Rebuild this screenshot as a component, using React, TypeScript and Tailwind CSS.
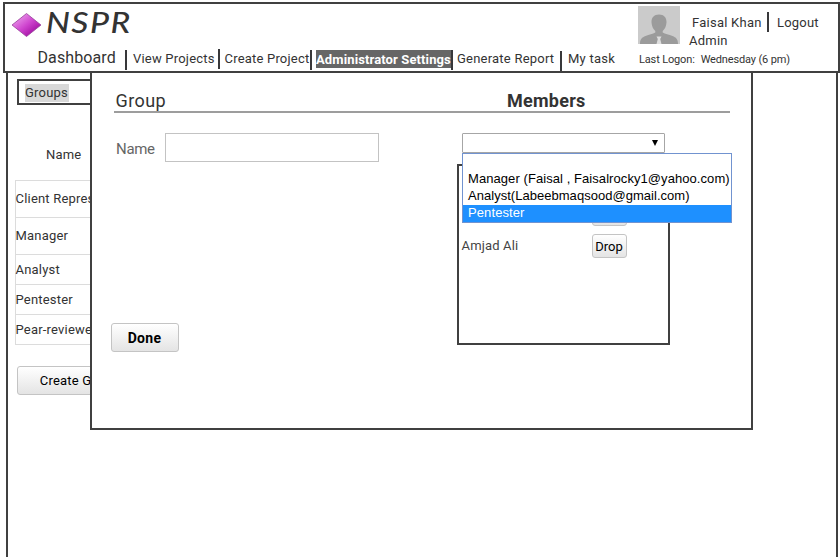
import React from "react";

const groups = [
  { name: "Client Representative", height: "h-[37px]" },
  { name: "Manager", height: "h-[37px]" },
  { name: "Analyst", height: "h-[30px]" },
  { name: "Pentester", height: "h-[30px]" },
  { name: "Pear-reviewer", height: "h-[30px]" },
];

const button =
  "rounded-[3px] border border-[#c4c4c4] bg-linear-to-b from-white to-[#e4e4e4] text-black whitespace-nowrap";

function Separator({ className = "" }: { className?: string }) {
  return <span className={`h-5 w-[2px] shrink-0 bg-[#38383a] ${className}`} />;
}

function Logo() {
  return (
    <div className="flex h-[45px] items-start pl-[6px]">
      <svg className="mt-2 h-[26px] w-[31px]" viewBox="0 0 30 26" preserveAspectRatio="none">
        <defs>
          <linearGradient id="gem" x1="0" y1="0" x2="1" y2="1">
            <stop offset="0.2" stopColor="#e58be5" />
            <stop offset="0.5" stopColor="#cf45cf" />
            <stop offset="0.8" stopColor="#a512a5" />
          </linearGradient>
        </defs>
        <path d="M15 1.500 29 13 15 24.500 1 13Z" fill="url(#gem)" stroke="#96409a" strokeWidth="0.8" />
      </svg>
      <span className="ml-[4px] origin-left scale-x-[1.2] font-['Segoe_Print','Bradley_Hand','Lato',sans-serif] text-[28px] leading-9 font-medium tracking-[1.2px] text-[#333] italic">
        NSPR
      </span>
    </div>
  );
}

function Nav() {
  return (
    <nav className="flex h-[22px] items-start text-[13px] leading-[18px] whitespace-nowrap">
      <a className="ml-8 w-[88px] pl-[0.5px] text-[16px] tracking-[0.1px]">Dashboard</a>
      <Separator className="mt-[1px]" />
      <a className="ml-[6px] w-[85px] pt-[1px] tracking-[0.2px]">View Projects</a>
      <Separator />
      <a className="ml-[4px] w-[86px] pt-[1px] pl-[0.5px] tracking-[0.2px]">Create Project</a>
      <Separator className="mt-[1px]" />
      <a className="mt-[1px] ml-[4px] w-[135px] bg-[#666] pt-[1px] leading-[17px] font-bold tracking-[0.12px] text-white">
        Administrator Settings
      </a>
      <Separator className="mt-[1px]" />
      <a className="ml-[4px] w-[103px] pt-[1px] tracking-[0.22px]">Generate Report</a>
      <Separator className="mt-[2px]" />
      <a className="ml-[6px] pt-[1px] tracking-[0.25px]">My task</a>
    </nav>
  );
}

function UserPanel() {
  return (
    <div className="w-[200px] shrink-0 pt-[2px] whitespace-nowrap">
      <div className="flex h-[45px] items-start">
        <svg className="h-[38px] w-[42px] shrink-0" viewBox="0 0 42 38">
          <rect width="42" height="38" fill="#cbcbcb" />
          <path
            d="M21 8.500c5 0 7.700 3 7.500 8-.2 4-2 7-3.800 8.500v1.500c2.500 1.500 6 2 9.800 3.500C38 31.500 40 33 40 38H2c0-5 2-6.500 5.500-8 3.800-1.500 7.300-2 9.800-3.500V25c-1.800-1.500-3.600-4.500-3.800-8.500-.2-5 2.500-8 7.500-8Z"
            fill="#9b9b9b"
          />
          <path d="M18.500 30.500h5l-1.300 2.500 1.300 5h-5l1.300-5Z" fill="#dedede" />
        </svg>
        <div className="ml-[9px] w-[78px] text-[13px] leading-[18px] tracking-[0.25px]">
          <div className="pt-[8px] pl-[3px]">Faisal Khan</div>
          <div>Admin</div>
        </div>
        <Separator className="mt-[6px]" />
        <a className="ml-[8px] pt-[8px] text-[13px] leading-[18px] tracking-[0.2px]">Logout</a>
      </div>
      <div className="pl-[1px] text-[11px] leading-[17px] tracking-[-0.15px]">
        Last Logon:<span className="ml-[6px]">Wednesday (6 pm)</span>
      </div>
    </div>
  );
}

function GroupsPage() {
  return (
    <section className="flex h-full w-[832px] flex-col items-start border-x-2 border-[#404040] text-[13px] tracking-[0.2px]">
      <div className="mt-[6px] ml-[9px] h-[26px] w-[300px] border-2 border-[#404040] pt-[2px] pl-[6px]">
        <span className="inline-block h-[18px] w-[44px] bg-[#d8d8d8] leading-[18px]">Groups</span>
      </div>
      <div className="mt-[41px] ml-[38px] leading-[18px]">Name</div>
      <div className="mt-[16px] ml-[7px] w-[400px] border-x border-t border-[#dcdcdc]">
        {groups.map((g) => (
          <div key={g.name} className={`flex items-center border-b border-[#dcdcdc] ${g.height}`}>
            <span className="-ml-[0.5px]">{g.name}</span>
          </div>
        ))}
      </div>
      <button className={`mt-[21px] ml-[9px] h-[29px] w-[124px] ${button}`}>Create Group</button>
    </section>
  );
}

function MemberOptions() {
  return (
    <ul className="absolute top-[20px] left-0 h-[70px] w-[270px] border border-[#7193d0] bg-white font-['Liberation_Sans',Arial,sans-serif] text-[13px] leading-[15px] whitespace-nowrap text-black">
      <li className="h-[17px]" />
      <li className="h-[17px] pl-[5px] tracking-[0.07px]">Manager (Faisal , Faisalrocky1@yahoo.com)</li>
      <li className="h-[17px] pl-[5px] tracking-[0.03px]">Analyst(Labeebmaqsood@gmail.com)</li>
      <li className="h-[17px] bg-[#1e90ff] pl-[5px] tracking-[0.1px] text-white">Pentester</li>
    </ul>
  );
}

function GroupDialog() {
  return (
    <div className="absolute top-[71px] left-[90px] h-[359px] w-[663px] border-2 border-[#404040] bg-white pt-[17px]">
      <div className="ml-[22px] flex h-[23px] w-[616px] border-b-2 border-[#9d9d9d] text-[18px] leading-[21px]">
        <h2 className="w-[393px] pl-[1.5px] tracking-[0.4px]">Group</h2>
        <h2 className="font-bold tracking-[0.25px]">Members</h2>
      </div>
      <div className="mt-[20px] flex">
        <div className="w-[365px]">
          <label className="ml-[24px] flex items-center text-[15px] text-[#666]">
            <span className="w-[49px] pt-[3px] tracking-[-0.3px]">Name</span>
            <input className="h-[29px] w-[214px] border border-[#c3c3c3]" />
          </label>
          <button
            className={`mt-[161px] ml-[19px] block h-[29px] w-[68px] pt-px pr-px text-[14px] font-bold tracking-[0.3px] ${button}`}
          >
            Done
          </button>
        </div>
        <div>
          <div className="relative ml-[5px] h-[20px] w-[203px] rounded-[1px] border border-[#a6a6a6]">
            <svg className="mt-[6px] ml-[189px] h-[6px] w-[6px]" viewBox="0 0 6 6">
              <path d="M0 0H6L3 6Z" fill="#000" />
            </svg>
            <div className="absolute -top-px -left-px">
              <MemberOptions />
            </div>
          </div>
          <div className="mt-[11px] flex h-[181px] w-[213px] flex-col border-2 border-[#404040] pt-[36px] pl-[3px] text-[13px]">
            <div className="flex h-[32px] items-start">
              <span className="w-[130px]" />
              <button className={`h-[24px] w-[35px] ${button}`}>Drop</button>
            </div>
            <div className="flex items-center">
              <span className="w-[130px] -ml-[0.5px] mr-[0.5px] tracking-[0.15px] text-[#444]">Amjad Ali</span>
              <button className={`h-[24px] w-[35px] pt-px pr-px ${button}`}>Drop</button>
            </div>
          </div>
        </div>
      </div>
    </div>
  );
}

export default function App() {
  return (
    <div className="relative flex h-[557px] w-[840px] flex-col overflow-hidden bg-white pt-[2px] font-['Roboto',sans-serif] text-[#333]">
      <header className="ml-[3px] flex h-[71px] w-[837px] shrink-0 border-2 border-[#404040]">
        <div className="w-[633px]">
          <Logo />
          <Nav />
        </div>
        <UserPanel />
      </header>
      <main className="ml-[6px] min-h-0 flex-1">
        <GroupsPage />
      </main>
      <GroupDialog />
    </div>
  );
}
